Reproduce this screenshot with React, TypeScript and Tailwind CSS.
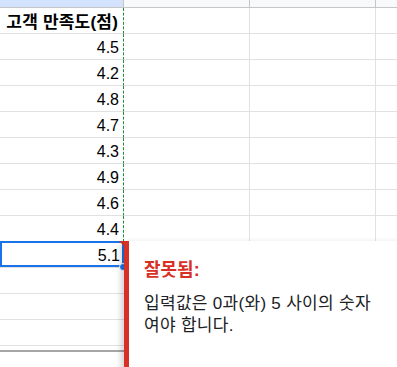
import React from 'react';

const values = ['4.5', '4.2', '4.8', '4.7', '4.3', '4.9', '4.6', '4.4'];

const font = { fontFamily: '"Liberation Sans", "Noto Sans CJK KR", sans-serif' };

// one grid row: column A holds the value, B-D are empty
const Row = ({ children, aClass = '' }: { children?: React.ReactNode; aClass?: string }) => (
  <div className="flex h-[26px]">
    <div className={`relative w-[124px] shrink-0 flex items-center justify-end pr-[4px] border-b border-[#e1e1e1] ${aClass}`}>
      {children}
    </div>
    <div className="w-[126px] shrink-0 border-b border-r border-[#e1e1e1]"></div>
    <div className="w-[126px] shrink-0 border-b border-r border-[#e1e1e1]"></div>
    <div className="flex-1 border-b border-[#e1e1e1]"></div>
  </div>
);

const dashed = 'border-r border-r-[#1e8e3e] [border-right-style:dashed]';

const App = () => {
  return (
    <div className="relative w-[397px] h-[367px] overflow-hidden bg-white text-black" style={font}>
      {/* COLUMN HEADER STRIP */}
      <div className="flex h-[8px]">
        <div className="w-[124px] shrink-0 bg-[#d3e3fd] border-b border-r border-[#c4c7c5]"></div>
        <div className="w-[126px] shrink-0 bg-[#f8f9fa] border-b border-r border-[#c4c7c5]"></div>
        <div className="w-[126px] shrink-0 bg-[#f8f9fa] border-b border-r border-[#c4c7c5]"></div>
        <div className="flex-1 bg-[#f8f9fa] border-b border-[#c4c7c5]"></div>
      </div>

      {/* TITLE + VALUES */}
      <Row aClass={dashed}>
        <span className="text-[17px] font-bold leading-none pt-[3px] pr-[1px] tracking-[0.2px]">고객 만족도(점)</span>
      </Row>
      {values.map((v) => (
        <Row key={v} aClass={dashed}>
          <span className="text-[16px] leading-[18px] pt-[2px]">{v}</span>
        </Row>
      ))}

      {/* SELECTED CELL WITH INVALID VALUE */}
      <Row>
        <span className="text-[16px] leading-[18px] pt-[2px]">5.1</span>
        <div className="absolute left-0 top-[-1px] w-[124px] h-[26px] border-2 border-[#1a73e8]"></div>
        <div className="absolute right-[-1px] top-[-1px] w-0 h-0 border-l-[6px] border-l-transparent border-t-[6px] border-t-[#d93025]"></div>
        <div className="absolute right-[-3px] bottom-[-4px] w-[8px] h-[8px] rounded-full bg-[#1a73e8] border border-white"></div>
      </Row>

      <Row />
      <Row />
      <Row />
      <div className="h-[6px] border-b-2 border-[#a6a6a6] w-full"></div>

      {/* VALIDATION POPUP */}
      <div className="absolute left-[124px] top-[241px] w-[290px] h-[140px] bg-white border-l-[5px] border-[#d93025] shadow-[-3px_2px_6px_rgba(0,0,0,0.18)] pl-[15px] pt-[18px]">
        <p className="text-[18px] font-bold text-[#d93025] leading-[22px]">잘못됨:</p>
        <p className="mt-[12px] text-[17px] leading-[22px] tracking-[0.3px] text-[#202124]">
          입력값은 0과(와) 5 사이의 숫자
          <br />
          여야 합니다.
        </p>
      </div>
    </div>
  );
};

export default App;
